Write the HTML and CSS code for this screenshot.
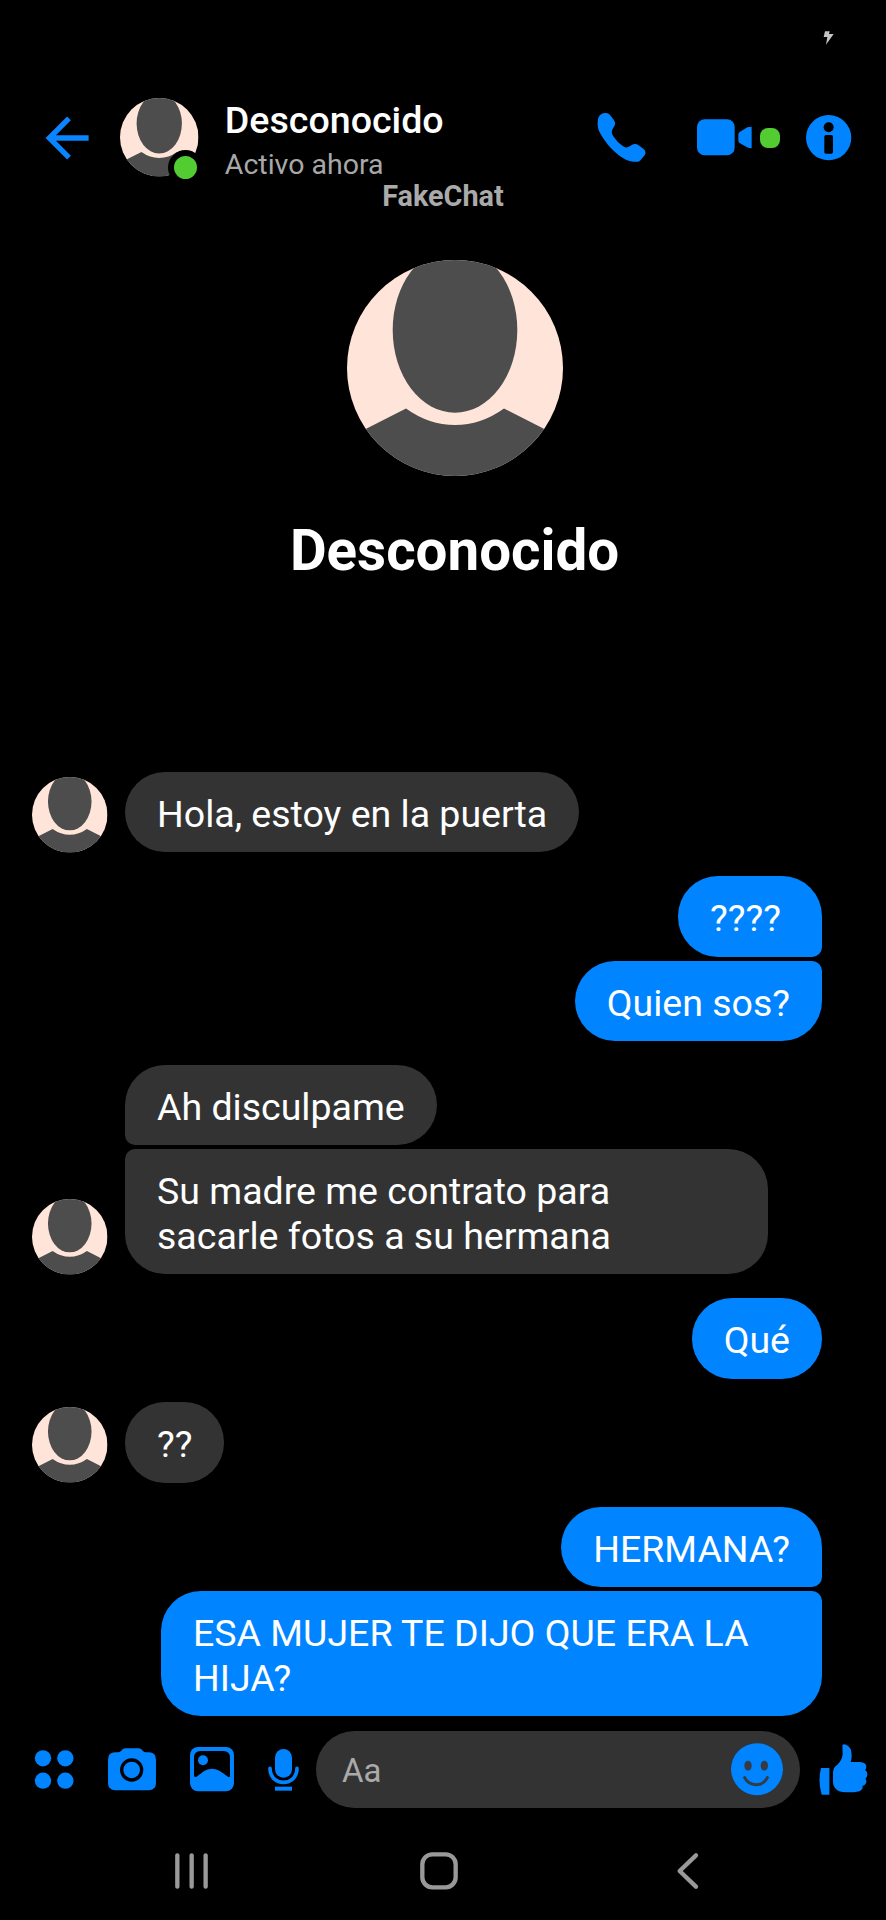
FILE: index.html
```
<!DOCTYPE html>
<html lang="es">
<head>
<meta charset="utf-8">
<title>FakeChat</title>
<link rel="stylesheet" href="styles.css">
</head>
<body>
<svg class="defs" width="0" height="0">
  <symbol id="avatar" viewBox="0 0 216 216" overflow="visible">
    <clipPath id="round"><circle cx="108" cy="108" r="108"/></clipPath>
    <g clip-path="url(#round)">
      <rect width="216" height="216" fill="#ffe5d9"/>
      <ellipse cx="108" cy="70" rx="62.3" ry="82.7" fill="#4d4d4d"/>
      <path d="M0 178.500L59 148.500Q82 165 108 165T157 148.500L216 178.500V216H0Z" fill="#4d4d4d"/>
    </g>
  </symbol>
</svg>
<div class="screen">
  <div class="status">
    <svg class="bolt" viewBox="788 92 33 42"><path d="M794 93H808L806 101H820L797 133L801 110H790Z" fill="#c4c4c4"/></svg>
  </div>
  <header class="header">
    <svg class="back" viewBox="138 106 130 132"><path d="M266 172H150M207 113L148 172L207 231" fill="none" stroke="#0a84ff" stroke-width="16"/></svg>
    <div class="contact-avatar">
      <svg class="avatar-img"><use href="#avatar"/></svg>
      <span class="online"></span>
    </div>
    <div class="contact">
      <div class="name">Desconocido</div>
      <div class="activity">Activo ahora</div>
    </div>
    <div class="actions">
      <svg class="phone" viewBox="112 336 148 152"><path d="M125 342C133 337 143 338 149 343C155 350 162 358 166 367C168 374 163 381 159 387C155 394 156 400 160 407C169 421 181 433 194 441C201 444 208 441 215 436C222 431 230 431 236 435L252 447C259 453 259 460 255 466L241 482C236 487 224 486 213 484C172 473 133 424 118 393C113 382 113 368 115 357C117 350 120 346 125 342Z"/></svg>
      <svg class="video" viewBox="411 356 165 110"><rect x="411" y="357" width="113" height="108" rx="23"/><path d="M535 402Q535 397 540 394L562 381Q566 379 575 379V444Q566 444 561 441L540 429Q535 426 535 421Z"/></svg>
      <span class="live"></span>
      <svg class="info" viewBox="739 344 136 136"><circle cx="807" cy="412" r="68"/><circle cx="807" cy="381" r="15" fill="#000"/><rect x="794" y="404" width="26" height="56" rx="5" fill="#000"/></svg>
    </div>
  </header>
  <div class="watermark">FakeChat</div>
  <section class="profile">
    <svg class="profile-avatar"><use href="#avatar"/></svg>
    <h1 class="profile-name">Desconocido</h1>
  </section>
  <main class="chat">
    <div class="group them">
      <svg class="sender"><use href="#avatar"/></svg>
      <div class="stack"><div class="bubble">Hola, estoy en la puerta</div></div>
    </div>
    <div class="group me">
      <div class="stack"><div class="bubble pad-end">????</div><div class="bubble">Quien sos?</div></div>
    </div>
    <div class="group them">
      <svg class="sender"><use href="#avatar"/></svg>
      <div class="stack"><div class="bubble">Ah disculpame</div><div class="bubble wide">Su madre me contrato para sacarle fotos a su hermana</div></div>
    </div>
    <div class="group me">
      <div class="stack"><div class="bubble">Qué</div></div>
    </div>
    <div class="group them">
      <svg class="sender"><use href="#avatar"/></svg>
      <div class="stack"><div class="bubble">??</div></div>
    </div>
    <div class="group me">
      <div class="stack"><div class="bubble">HERMANA?</div><div class="bubble wide">ESA MUJER TE DIJO QUE ERA LA HIJA?</div></div>
    </div>
  </main>
  <footer class="composer">
    <svg class="apps" viewBox="104 150 116 117"><circle cx="128" cy="175" r="24.500"/><circle cx="195" cy="175" r="24.500"/><circle cx="128" cy="242" r="24.500"/><circle cx="195" cy="242" r="24.500"/></svg>
    <svg class="camera" viewBox="324 143 144 127"><path d="M346 156H356C364 156 365 144 377 144H415C427 144 428 156 436 156H446Q468 156 468 178V248Q468 270 446 270H346Q324 270 324 248V178Q324 156 346 156Z"/><circle cx="395" cy="209" r="30" stroke="#000" stroke-width="10"/></svg>
    <svg class="gallery" viewBox="570 140 132 133"><rect x="570" y="140" width="132" height="133" rx="24"/><path d="M602 152H670Q690 152 690 172V226Q690 233 684 229C667 217 654 205 636 205C618 205 605 218 590 229Q582 233 582 225V172Q582 152 602 152Z" fill="#000"/><circle cx="609" cy="180" r="15"/></svg>
    <svg class="mic" viewBox="804 145 93 125"><rect x="825" y="145" width="51" height="86" rx="25.500"/><path d="M810 203C810 259 891 259 891 203" fill="none" stroke="#0084ff" stroke-width="11" stroke-linecap="round"/><rect x="825" y="258" width="51" height="12"/></svg>
    <div class="input">
      <span class="placeholder">Aa</span>
      <svg class="smile" viewBox="873 128 156 157"><circle cx="951" cy="206.500" r="78"/><ellipse cx="924" cy="196" rx="11" ry="15" fill="#333c46"/><ellipse cx="973" cy="196" rx="11" ry="15" fill="#333c46"/><path d="M914 232C928 260 968 260 982 232" fill="none" stroke="#333c46" stroke-width="9" stroke-linecap="round"/></svg>
    </div>
    <svg class="like" viewBox="1137 132 146 153"><path d="M1143 204H1168V284H1145Q1133 244 1143 204Z"/><path d="M1207 136Q1210 131 1218 134Q1235 141 1235 165Q1235 178 1232 186H1260Q1279 188 1279 200Q1279 207 1275 209Q1282 214 1282 223Q1282 233 1276 236Q1281 242 1278 250Q1275 256 1267 258Q1270 266 1263 271Q1256 277 1227 277Q1205 277 1194 272Q1179 262 1179 246V218Q1179 202 1192 194Q1208 180 1208 160Z"/></svg>
  </footer>
  <nav class="nav">
    <svg class="recents" viewBox="525 457 100 108"><path d="M532 464V558M575 464V558M617 464V558"/></svg>
    <svg class="home" viewBox="0 0 114 114"><rect x="7" y="7" width="100" height="99" rx="30"/></svg>
    <svg class="prev" viewBox="710 457 64 108"><path d="M767 464L718 511L767 558"/></svg>
  </nav>
</div>
</body>
</html>
```
FILE: styles.css
```
* { box-sizing: border-box; }
body { margin: 0; background: #000; font-family: Roboto, sans-serif; color: #fff; }
svg { display: block; flex: none; fill: #0084ff; overflow: visible; }
.defs { position: absolute; }
.screen { width: 886px; height: 1920px; display: flex; flex-direction: column; overflow: hidden; background: #000; }
.status { height: 98px; padding: 31px 52px 0 0; display: flex; justify-content: flex-end; }
.bolt { width: 11px; height: 14px; }
.header { height: 82px; padding-left: 46px; display: flex; align-items: flex-start; }
.back { width: 43.300px; height: 44px; margin-top: 17.500px; }
.contact-avatar { position: relative; width: 78.500px; height: 78.500px; margin-left: 31px; }
.avatar-img { width: 100%; height: 100%; }
.online { position: absolute; left: 47.500px; top: 52px; width: 35px; height: 35px; border: 6px solid #000; border-radius: 50%; background: #52cc30; }
.contact { margin-left: 26px; width: 240px; }
.name { font-size: 37.600px; line-height: 45px; font-weight: 500; }
.activity { margin-top: 6px; font-size: 28.500px; line-height: 32px; color: #a8a8a8; }
.actions { display: flex; align-items: center; height: 79px; margin-left: 132px; }
.phone { width: 49.300px; height: 50.700px; }
.video { width: 55px; height: 36.700px; margin-left: 51px; }
.live { width: 20px; height: 20px; margin-left: 8px; border-radius: 8px; background: #52cc30; }
.info { width: 45.300px; height: 45.300px; margin-left: 26px; }
.watermark { height: 80px; line-height: 32px; font-size: 28.800px; font-weight: 700; color: #aaa; text-align: center; }
.profile { height: 512px; padding-left: 23px; display: flex; flex-direction: column; align-items: center; }
.profile-avatar { width: 216px; height: 216px; }
.profile-name { margin: 42px 0 0; font-size: 56.500px; line-height: 66px; font-weight: 700; }
.chat { padding: 0 64px 0 32px; display: flex; flex-direction: column; gap: 23.900px; }
.group { display: flex; align-items: flex-end; }
.me { justify-content: flex-end; }
.sender { width: 75.500px; height: 75.500px; margin-right: 17.500px; }
.stack { display: flex; flex-direction: column; align-items: flex-start; gap: 4px; }
.me .stack { align-items: flex-end; }
.bubble { padding: 20px 32px 16px; border-radius: 40px; font-size: 37.500px; line-height: 44.400px; background: #333; }
.me .bubble { background: #0084ff; }
.me .pad-end { padding-right: 41px; }
.wide { width: 643px; }
.me .wide { width: 661px; }
.them .bubble:not(:last-child) { border-bottom-left-radius: 10px; }
.them .bubble:not(:first-child) { border-top-left-radius: 10px; }
.me .bubble:not(:last-child) { border-bottom-right-radius: 10px; }
.me .bubble:not(:first-child) { border-top-right-radius: 10px; }
.composer { margin-top: 15px; height: 77px; padding-left: 34.700px; display: flex; align-items: center; }
.apps { width: 38.700px; height: 39px; }
.camera { width: 48px; height: 42.300px; margin-left: 34.600px; }
.gallery { width: 44px; height: 44.300px; margin-left: 34px; }
.mic { width: 31px; height: 41.700px; margin-left: 34px; }
.input { width: 484px; height: 77px; margin-left: 17px; padding: 0 17px 0 26px; border-radius: 39px; background: #333; display: flex; align-items: center; justify-content: space-between; }
.placeholder { font-size: 33px; color: #aaa; padding-top: 3px; }
.smile { width: 52px; height: 52.300px; }
.like { width: 48.700px; height: 51px; margin-left: 19px; }
.nav { margin-top: 43px; height: 40px; padding-left: 175px; display: flex; align-items: center; }
.nav svg { fill: none; stroke: #999; stroke-width: 13; stroke-linecap: round; stroke-linejoin: round; }
.recents { width: 33.300px; height: 36px; }
.home { width: 38px; height: 38px; margin-left: 212px; }
.prev { width: 21.300px; height: 36px; margin-left: 218.500px; }
```
